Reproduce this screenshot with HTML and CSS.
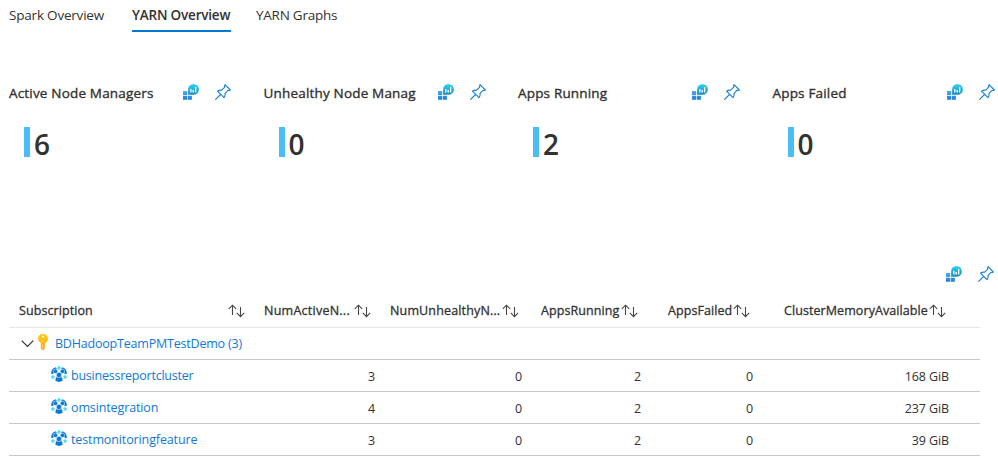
FILE: index.html
```html
<!DOCTYPE html>
<html lang="en">
<head>
<meta charset="utf-8">
<title>YARN Overview</title>
<link rel="stylesheet" href="styles.css">
</head>
<body>
<svg class="defs" width="0" height="0" aria-hidden="true">
  <defs>
    <linearGradient id="bubble" x1="0" y1="0" x2="0" y2="1"><stop offset="0" stop-color="#32d4f5"/><stop offset="1" stop-color="#198ab3"/></linearGradient>
    <linearGradient id="tile" x1="0" y1="0" x2="0" y2="1"><stop offset="0" stop-color="#50a8f0"/><stop offset="1" stop-color="#1c7fda"/></linearGradient>
    <linearGradient id="gold" x1="0" y1="0" x2="0" y2="1"><stop offset="0" stop-color="#ffcb12"/><stop offset="1" stop-color="#fea11b"/></linearGradient>
  </defs>
  <symbol id="metrics" viewBox="0 0 16 16">
    <path fill="url(#tile)" d="M0 7h4.200v4H0zM0 11.700h4.200v4H0zM4.900 11.700h4v4h-4z"/>
    <path fill="url(#bubble)" d="M10.500 0a5.300 5.300 0 1 1 0 10.800H5.100V5.400A5.400 5.400 0 0 1 10.500 0z"/>
    <path fill="#fff" d="M7.200 5h1.300v3.500H7.200zM9.500 6h1.400v2.500H9.500zM12 3h1.300v5.500H12z"/>
  </symbol>
  <symbol id="pin" viewBox="0 0 16 16">
    <path fill="none" stroke="#1580d8" stroke-width="1.1" stroke-linejoin="round" d="M.3 15.700 5.500 10.500M10 .6l5.400 5.400c-1 .5-1.700.6-2.400.4l-3 3c.3 1.600 0 3-1 4.300L2.500 7.200c1.300-1 2.700-1.300 4.200-1l3-3c-.2-.9-.1-1.700.3-2.600z"/>
  </symbol>
  <symbol id="sort" viewBox="0 0 17 14">
    <path fill="none" stroke="#484644" stroke-width="1.100" d="M4.500 11V1.200M.8 4.900l3.700-3.700 3.700 3.700M12.500 3v9.500M8.800 8.900l3.700 3.700 3.700-3.700"/>
  </symbol>
  <symbol id="cluster" viewBox="0 0 16 16">
    <g fill="#50dbf0"><circle cx="8" cy="1.900" r="1.800"/><circle cx="1.900" cy="11.100" r="1.800"/><circle cx="14.100" cy="11.100" r="1.800"/></g>
    <g fill="#1078d4">
      <path d="M.3 7.900C-.2 4.800 1.600 2 4.800 1.300l1 1.700L2 7.900z"/>
      <path d="M15.700 7.900c.5-3.100-1.300-5.900-4.500-6.600l-1 1.700L14 7.900z"/>
      <path d="M4.300 14.500c.2-2.600 1.200-3.700 2.200-3.700h3c1 0 2 1.100 2.200 3.700-2.300 1.900-5.100 1.900-7.400 0z"/>
    </g>
    <g fill="#1078d4" stroke="#fff" stroke-width=".5"><circle cx="4.500" cy="5.300" r="2.200"/><circle cx="11.500" cy="5.300" r="2.200"/><circle cx="8" cy="9" r="2.700"/></g>
  </symbol>
  <symbol id="key" viewBox="0 0 12 16">
    <path fill="url(#gold)" d="M6 0c2.800 0 5 2.100 5 4.700 0 1.900-1 3.300-2.500 4.100v.8l-.9.900.9.900-1 1 .8.900-.8.900v.6L6.200 16h-.6l-1.800-1.500V8.900A4.600 4.600 0 0 1 1 4.700C1 2.100 3.200 0 6 0z"/>
    <circle cx="6" cy="2.600" r="1.200" fill="#fff3bd"/><path stroke="#ffe16b" stroke-width=".8" d="M5.400 9.700v4.300M4 7.200h4"/>
  </symbol>
</svg>

<nav class="tabs">
  <a class="tab t1"><span>Spark Overview</span></a>
  <a class="tab t2 active"><span>YARN Overview</span></a>
  <a class="tab t3"><span>YARN Graphs</span></a>
</nav>

<section class="tiles">
  <article class="tile">
    <header><h2>Active Node Managers</h2><svg class="icon"><use href="#metrics"/></svg><svg class="icon"><use href="#pin"/></svg></header>
    <p class="value">6</p>
  </article>
  <article class="tile">
    <header><h2>Unhealthy Node Manag</h2><svg class="icon"><use href="#metrics"/></svg><svg class="icon"><use href="#pin"/></svg></header>
    <p class="value">0</p>
  </article>
  <article class="tile">
    <header><h2>Apps Running</h2><svg class="icon"><use href="#metrics"/></svg><svg class="icon"><use href="#pin"/></svg></header>
    <p class="value">2</p>
  </article>
  <article class="tile">
    <header><h2>Apps Failed</h2><svg class="icon"><use href="#metrics"/></svg><svg class="icon"><use href="#pin"/></svg></header>
    <p class="value">0</p>
  </article>
</section>

<div class="toolbar"><svg class="icon"><use href="#metrics"/></svg><svg class="icon"><use href="#pin"/></svg></div>

<main class="grid">
  <div class="row head">
    <div class="c1"><span>Subscription</span><svg class="sort"><use href="#sort"/></svg></div>
    <div class="c2"><span>NumActiveN...</span><svg class="sort"><use href="#sort"/></svg></div>
    <div class="c3"><span>NumUnhealthyN...</span><svg class="sort"><use href="#sort"/></svg></div>
    <div class="c4"><span>AppsRunning</span><svg class="sort"><use href="#sort"/></svg></div>
    <div class="c5"><span>AppsFailed</span><svg class="sort"><use href="#sort"/></svg></div>
    <div class="c6"><span>ClusterMemoryAvailable</span><svg class="sort"><use href="#sort"/></svg></div>
  </div>
  <div class="group">
    <svg class="chevron" viewBox="0 0 13 8"><path d="m.7.700 5.800 5.800L12.300.7"/></svg>
    <svg class="key"><use href="#key"/></svg>
    <a>BDHadoopTeamPMTestDemo (3)</a>
  </div>
  <div class="row">
    <div class="c1 name"><svg class="icon"><use href="#cluster"/></svg><a class="n1">businessreportcluster</a></div>
    <div class="c2">3</div><div class="c3">0</div><div class="c4">2</div><div class="c5">0</div><div class="c6">168 GiB</div>
  </div>
  <div class="row">
    <div class="c1 name"><svg class="icon"><use href="#cluster"/></svg><a>omsintegration</a></div>
    <div class="c2">4</div><div class="c3">0</div><div class="c4">2</div><div class="c5">0</div><div class="c6">237 GiB</div>
  </div>
  <div class="row">
    <div class="c1 name"><svg class="icon"><use href="#cluster"/></svg><a>testmonitoringfeature</a></div>
    <div class="c2">3</div><div class="c3">0</div><div class="c4">2</div><div class="c5">0</div><div class="c6">39 GiB</div>
  </div>
</main>
</body>
</html>
```
FILE: styles.css
```css
* { box-sizing: border-box; }
body { margin: 0; height: 463px; overflow: hidden; background: #fff; color: #323130; font: 13px/18px "Open Sans", "Noto Sans", sans-serif; }
.defs { display: block; height: 0; }
.icon { width: 16px; height: 16px; flex: none; }
a { white-space: nowrap; }

.tabs { display: flex; height: 83px; padding: 6px 0 0 9px; gap: 25px; align-items: flex-start; font-size: 13.5px; }
.tab { height: 26px; white-space: nowrap; letter-spacing: -.2px; }
.t1 { width: 98px; }
.t2 { width: 99px; }
.t3 { width: 84px; letter-spacing: -.25px; }
.active { font-weight: 600; border-bottom: 2px solid #0078d4; }

.tiles { display: grid; grid-template-columns: repeat(4, 254.5px); height: 183px; }
.tile { padding-left: 9px; }
.tile header { display: flex; height: 18px; align-items: center; padding-right: 23.5px; gap: 16px; }
.tile h2 { flex: 1; width: 0; margin: 0; padding-top: 2px; font-size: 13.5px; font-weight: 400; -webkit-text-stroke: .35px #323130; white-space: nowrap; letter-spacing: .18px; }
.value { display: flex; align-items: center; height: 30px; margin: 26px 0 0 15px; padding: 3px 0 0 4px; border-left: 6px solid #47bef5; font-size: 28px; font-weight: 600; }

.toolbar { display: flex; justify-content: flex-end; gap: 16px; height: 29px; padding-right: 4px; }

.grid { width: 971px; margin-left: 9px; font-size: 12.5px; }
.row { display: grid; grid-template-columns: 245px 126px 151px 127px 116px 206px; height: 32px; border-bottom: 1px solid #c8c8c8; letter-spacing: -.1px; }
.row > div { display: flex; align-items: center; justify-content: flex-end; white-space: nowrap; padding-top: 3px; }
.head { height: 33px; border-color: #e6e6e6; -webkit-text-stroke: .3px #323130; letter-spacing: .08px; }
.sort { width: 17px; height: 14px; flex: none; }
.row .c2 { padding-right: 5px; }
.row .c3 { padding-right: 9px; }
.row .c4 { padding-right: 17px; }
.row .c5 { padding-right: 21px; }
.row .c6 { padding-right: 31px; }
.row.head > div { padding: 0 0 1px 10px; }
.row.head .c1 { padding-right: 9px; }
.row.head .c2 { padding-right: 9px; letter-spacing: .25px; }
.row.head .c3 { padding-right: 12px; letter-spacing: .15px; }
.row.head .c4 { padding-right: 20px; }
.row.head .c5 { padding-right: 24px; }
.row.head .c6 { padding-right: 34px; }
.head span { flex: 1; width: 0; }
.group { display: flex; align-items: center; height: 32px; border-bottom: 1px solid #c8c8c8; padding-left: 12px; letter-spacing: -.2px; }
.group a, .name a { color: #0f78d4; }
.chevron { width: 13px; height: 8px; fill: none; stroke: #323130; stroke-width: 1.2; }
.key { width: 12px; height: 16px; margin: 0 6px 3px 3px; }
.row .name { justify-content: flex-start; padding: 0 0 0 42px; gap: 4px; letter-spacing: -.12px; }
.name .n1 { letter-spacing: -.23px; }
.name .icon { margin-bottom: 3px; }
```
